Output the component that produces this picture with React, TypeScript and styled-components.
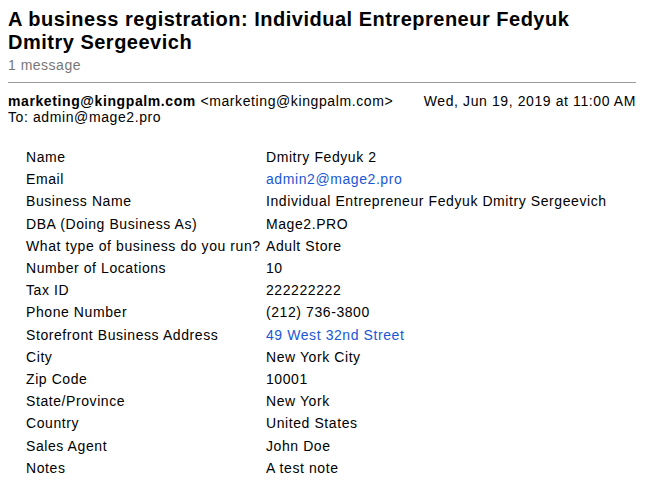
import React from "react";
import styled, { createGlobalStyle } from "styled-components";

const Global = createGlobalStyle`
  html, body { margin: 0; padding: 0; background: #fff; }
  body { font-family: "Liberation Sans", Arial, sans-serif; color: #000; }
`;

const Page = styled.div`
  padding: 8px 9px 0 8px;
`;

const Title = styled.h1`
  margin: 0;
  font-size: 20px;
  line-height: 23px;
  font-weight: bold;
  letter-spacing: 0.5px;
`;

const Count = styled.div`
  margin-top: 1px;
  font-size: 14px;
  line-height: 20px;
  letter-spacing: 0.5px;
  color: #777;
`;

const Rule = styled.hr`
  margin: 7px 0 0 0;
  border: 0;
  border-top: 1px solid #999;
  height: 0;
`;

const Header = styled.div`
  margin-top: 10px;
  font-size: 14px;
  line-height: 16px;
  letter-spacing: 0.6px;
`;

const FromRow = styled.div`
  display: flex;
  justify-content: space-between;
`;

const Sender = styled.b`
  letter-spacing: 0.6px;
`;

const To = styled.div``;

const Table = styled.div`
  display: grid;
  grid-template-columns: 240px 1fr;
  margin: 21px 0 0 18px;
  font-size: 14px;
  line-height: 22.2px;
  letter-spacing: 0.58px;
`;

const Cell = styled.div<{ $link?: boolean }>`
  color: ${(p) => (p.$link ? "#1a57d6" : "#000")};
  white-space: nowrap;
`;

const rows: [string, string, boolean?][] = [
  ["Name", "Dmitry Fedyuk 2"],
  ["Email", "admin2@mage2.pro", true],
  ["Business Name", "Individual Entrepreneur Fedyuk Dmitry Sergeevich"],
  ["DBA (Doing Business As)", "Mage2.PRO"],
  ["What type of business do you run?", "Adult Store"],
  ["Number of Locations", "10"],
  ["Tax ID", "222222222"],
  ["Phone Number", "(212) 736-3800"],
  ["Storefront Business Address", "49 West 32nd Street", true],
  ["City", "New York City"],
  ["Zip Code", "10001"],
  ["State/Province", "New York"],
  ["Country", "United States"],
  ["Sales Agent", "John Doe"],
  ["Notes", "A test note"],
];

export default function App() {
  return (
    <Page>
      <Global />
      <Title>
        A business registration: Individual Entrepreneur Fedyuk
        <br />
        Dmitry Sergeevich
      </Title>
      <Count>1 message</Count>
      <Rule />
      <Header>
        <FromRow>
          <span>
            <Sender>marketing@kingpalm.com</Sender> &lt;marketing@kingpalm.com&gt;
          </span>
          <span>Wed, Jun 19, 2019 at 11:00 AM</span>
        </FromRow>
        <To>To: admin@mage2.pro</To>
      </Header>
      <Table>
        {rows.map(([k, v, link]) => (
          <React.Fragment key={k}>
            <Cell>{k}</Cell>
            <Cell $link={link}>{v}</Cell>
          </React.Fragment>
        ))}
      </Table>
    </Page>
  );
}
